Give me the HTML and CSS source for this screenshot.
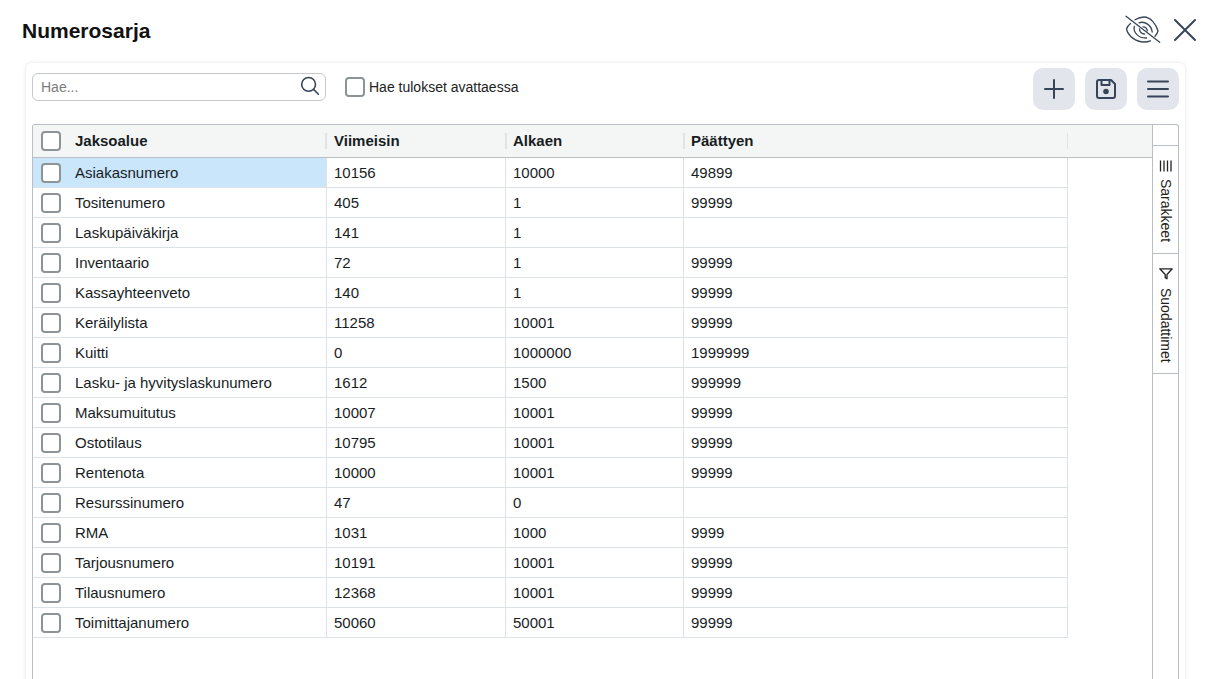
FILE: index.html
```html
<!DOCTYPE html>
<html lang="fi">
<head>
<meta charset="utf-8">
<title>Numerosarja</title>
<link rel="stylesheet" href="styles.css">
</head>
<body>
<div class="dialog">
  <header class="title-bar">
    <h1 class="title">Numerosarja</h1>
    <div class="title-actions">
      <svg class="eye-icon" viewBox="0 0 36 30" fill="none" stroke="#374559" stroke-width="1.300" stroke-linecap="round" stroke-linejoin="round"><path d="M1 1.300 L34.700 27.300"/><path d="M5.500 8.500 C3.500 10 2.200 12 1.500 14 C3 21 11 27 19 27 C21.500 27 23.500 26.600 25.500 25.800"/><path d="M10 4.800 C13 3 16 2 19 2 C25.500 2 31 9 33 16 C32.500 18 31.500 19.800 30 21.300"/><path d="M9.300 11.500 C8 17.500 13.500 23.400 21.500 23"/><path d="M14 7.800 C20 5.800 26.500 10.200 27.200 17"/><path d="M14.500 13.800 C14.300 16.800 16.800 19 19.500 19"/><path d="M18 11.800 C20.200 11.800 22 13.500 22.300 15.800"/></svg>
      <svg class="close-icon" viewBox="0 0 24 24" fill="none" stroke="#374559" stroke-width="2" stroke-linecap="round"><path d="M2 2 L22 22 M22 2 L2 22"/></svg>
    </div>
  </header>
  <main class="card">
    <div class="toolbar">
      <div class="search">
        <input class="search-input" type="text" placeholder="Hae...">
        <svg class="search-icon" viewBox="0 0 20 20" fill="none" stroke="#374559" stroke-width="1.6" stroke-linecap="round"><circle cx="8.600" cy="8.400" r="6.900"/><path d="M13.600 13.400 L18.400 18.200"/></svg>
      </div>
      <label class="open-check"><span class="box"></span>Hae tulokset avattaessa</label>
      <div class="tools">
        <button class="tool" aria-label="Lisää"><svg viewBox="0 0 24 24" fill="none" stroke="#374559" stroke-width="2" stroke-linecap="round"><path d="M12 3 V21 M3 12 H21"/></svg></button>
        <button class="tool" aria-label="Tallenna"><svg viewBox="0 0 24 24" fill="none" stroke="#374559" stroke-width="2" stroke-linejoin="round"><path d="M3 5 a2 2 0 0 1 2-2 H17 L21 7 V19 a2 2 0 0 1-2 2 H5 a2 2 0 0 1-2-2 Z"/><path d="M7.500 3 V8 H15.500 V3"/><circle cx="12" cy="14.500" r="1.800" fill="#374559"/></svg></button>
        <button class="tool" aria-label="Valikko"><svg viewBox="0 0 24 24" fill="none" stroke="#374559" stroke-width="2" stroke-linecap="round"><path d="M2 4.500 H22 M2 12 H22 M2 19.500 H22"/></svg></button>
      </div>
    </div>
    <div class="grid-wrap">
      <div class="grid-main">
        <div class="row head">
          <div class="cell first"><span class="box"></span><span class="head-label">Jaksoalue</span></div>
          <div class="cell">Viimeisin</div>
          <div class="cell">Alkaen</div>
          <div class="cell">Päättyen</div>
        </div>
        <div class="row selected"><div class="cell first"><span class="box"></span><span>Asiakasnumero</span></div><div class="cell">10156</div><div class="cell">10000</div><div class="cell">49899</div></div>
        <div class="row"><div class="cell first"><span class="box"></span><span>Tositenumero</span></div><div class="cell">405</div><div class="cell">1</div><div class="cell">99999</div></div>
        <div class="row"><div class="cell first"><span class="box"></span><span>Laskupäiväkirja</span></div><div class="cell">141</div><div class="cell">1</div><div class="cell"></div></div>
        <div class="row"><div class="cell first"><span class="box"></span><span>Inventaario</span></div><div class="cell">72</div><div class="cell">1</div><div class="cell">99999</div></div>
        <div class="row"><div class="cell first"><span class="box"></span><span>Kassayhteenveto</span></div><div class="cell">140</div><div class="cell">1</div><div class="cell">99999</div></div>
        <div class="row"><div class="cell first"><span class="box"></span><span>Keräilylista</span></div><div class="cell">11258</div><div class="cell">10001</div><div class="cell">99999</div></div>
        <div class="row"><div class="cell first"><span class="box"></span><span>Kuitti</span></div><div class="cell">0</div><div class="cell">1000000</div><div class="cell">1999999</div></div>
        <div class="row"><div class="cell first"><span class="box"></span><span>Lasku- ja hyvityslaskunumero</span></div><div class="cell">1612</div><div class="cell">1500</div><div class="cell">999999</div></div>
        <div class="row"><div class="cell first"><span class="box"></span><span>Maksumuitutus</span></div><div class="cell">10007</div><div class="cell">10001</div><div class="cell">99999</div></div>
        <div class="row"><div class="cell first"><span class="box"></span><span>Ostotilaus</span></div><div class="cell">10795</div><div class="cell">10001</div><div class="cell">99999</div></div>
        <div class="row"><div class="cell first"><span class="box"></span><span>Rentenota</span></div><div class="cell">10000</div><div class="cell">10001</div><div class="cell">99999</div></div>
        <div class="row"><div class="cell first"><span class="box"></span><span>Resurssinumero</span></div><div class="cell">47</div><div class="cell">0</div><div class="cell"></div></div>
        <div class="row"><div class="cell first"><span class="box"></span><span>RMA</span></div><div class="cell">1031</div><div class="cell">1000</div><div class="cell">9999</div></div>
        <div class="row"><div class="cell first"><span class="box"></span><span>Tarjousnumero</span></div><div class="cell">10191</div><div class="cell">10001</div><div class="cell">99999</div></div>
        <div class="row"><div class="cell first"><span class="box"></span><span>Tilausnumero</span></div><div class="cell">12368</div><div class="cell">10001</div><div class="cell">99999</div></div>
        <div class="row"><div class="cell first"><span class="box"></span><span>Toimittajanumero</span></div><div class="cell">50060</div><div class="cell">50001</div><div class="cell">99999</div></div>
      </div>
      <aside class="side">
        <div class="side-top"></div>
        <div class="side-tab tab-columns">
          <svg class="side-icon" viewBox="0 0 14 14" fill="none" stroke="#222" stroke-width="1.300"><path d="M1.500 1.500 V12.500 M5 1.500 V12.500 M8.500 1.500 V12.500 M12 1.500 V12.500"/></svg>
          <span class="side-label">Sarakkeet</span>
        </div>
        <div class="side-tab tab-filters">
          <svg class="side-icon" viewBox="0 0 14 14" fill="none" stroke="#222" stroke-width="1.300" stroke-linejoin="round"><path d="M0.800 1.800 H13.200 L8 7.500 V11.800 L6.200 10.600 V7.500 Z"/></svg>
          <span class="side-label">Suodattimet</span>
        </div>
      </aside>
    </div>
  </main>
</div>
</body>
</html>
```
FILE: styles.css
```css
* { box-sizing: border-box; }
html, body { height: 100%; }
body {
  margin: 0;
  background: #fff;
  font-family: "Liberation Sans", Arial, sans-serif;
  color: #181d1f;
  overflow: hidden;
}
.dialog { height: 679px; display: flex; flex-direction: column; overflow: hidden; }
.title-bar {
  height: 63px;
  flex: none;
  display: flex;
  align-items: flex-start;
  justify-content: space-between;
  padding: 15px 17px 0 22px;
}
.title { margin: 6px 0 0; font-size: 21px; line-height: 20px; font-weight: 700; color: #111; }
.title-actions { display: flex; align-items: center; gap: 12px; }
.eye-icon { width: 36px; height: 30px; display: block; }
.close-icon { width: 24px; height: 24px; display: block; }
.card {
  margin: 0 29px 0 26px;
  height: 640px;
  flex: none;
  padding: 5px 6px 0;
  background: #fff;
  border-radius: 6px 6px 0 0;
  box-shadow: 0 0 4px rgba(0, 0, 0, 0.12);
  display: flex;
  flex-direction: column;
}
.toolbar { height: 56px; flex: none; display: flex; align-items: flex-start; }
.search { position: relative; width: 294px; height: 28px; margin-top: 5px; flex: none; }
.search-input {
  width: 100%;
  height: 100%;
  padding: 0 30px 0 8px;
  border: 1px solid #c4c8cc;
  border-radius: 6px;
  font: 14px "Liberation Sans", Arial, sans-serif;
  outline: none;
}
.search-input::placeholder { color: #7d7d7d; opacity: 1; }
.search-icon { position: absolute; right: 6px; top: 3px; width: 20px; height: 20px; }
.box {
  width: 20px;
  height: 20px;
  flex: none;
  display: block;
  background: #fff;
  border: 2px solid #8c9498;
  border-radius: 4px;
}
.open-check {
  display: flex;
  align-items: center;
  gap: 4px;
  height: 20px;
  margin: 9px 0 0 19px;
  font-size: 14px;
  color: #222;
}
.tools { margin-left: auto; display: flex; gap: 10px; }
.tool {
  width: 42px;
  height: 42px;
  padding: 0;
  border: 0;
  border-radius: 10px;
  background: #e2e5ec;
  display: flex;
  align-items: center;
  justify-content: center;
}
.tool svg { width: 24px; height: 24px; display: block; }
.grid-wrap {
  flex: 1;
  min-height: 0;
  display: flex;
  border: 1px solid #babfc7;
  border-bottom: 0;
  border-radius: 3px 3px 0 0;
  overflow: hidden;
}
.grid-main { flex: 1; min-width: 0; }
.row {
  display: grid;
  grid-template-columns: 293px 180px 178px 384px;
  height: 30px;
  font-size: 15px;
}
.row .cell { border-bottom: 1px solid #dde2e6; border-right: 1px solid #dde2e6; padding-left: 7px; display: flex; align-items: center; }
.row .first { padding-left: 8px; gap: 14px; border-right: 0; }
.row .cell:nth-child(2) { border-left: 1px solid #dde2e6; }
.row .cell:nth-child(3) { border-left: 0; }
.head {
  height: 33px;
  background: #f4f6f5;
  border-bottom: 1px solid #babfc7;
  grid-template-columns: 293px 180px 178px 384px 1fr;
  font-weight: 700;
}
.row.head .cell { border-bottom: 0; border-right: 0; position: relative; padding-bottom: 2px; }
.row.head .first { padding-bottom: 0; }
.head-label { margin-bottom: 2px; }
.row.head .cell:nth-child(2) { border-left: 0; padding-left: 8px; }
.head .cell:not(.first)::before {
  content: "";
  position: absolute;
  left: -1px;
  top: 8px;
  height: 16px;
  width: 2px;
  background: #dfe3e4;
}
.head .cell:last-child::after {
  content: "";
  position: absolute;
  right: 0;
  top: 8px;
  height: 16px;
  width: 1px;
  background: #dfe3e4;
}
.selected .first { background: #c9e6fb; }
.side { width: 26px; flex: none; border-left: 1px solid #babfc7; display: flex; flex-direction: column; }
.side-top { height: 21px; flex: none; border-bottom: 1px solid #babfc7; }
.side-tab {
  flex: none;
  display: flex;
  flex-direction: column;
  align-items: center;
  padding-top: 13px;
  border-bottom: 1px solid #babfc7;
}
.tab-columns { height: 108px; }
.tab-filters { height: 120px; }
.side-icon { width: 14px; height: 14px; flex: none; display: block; }
.side-label {
  writing-mode: vertical-rl;
  font-size: 14px;
  line-height: 14px;
  margin-top: 6px;
  color: #222;
}
.tab-filters .side-label { margin-top: 7px; }
```
